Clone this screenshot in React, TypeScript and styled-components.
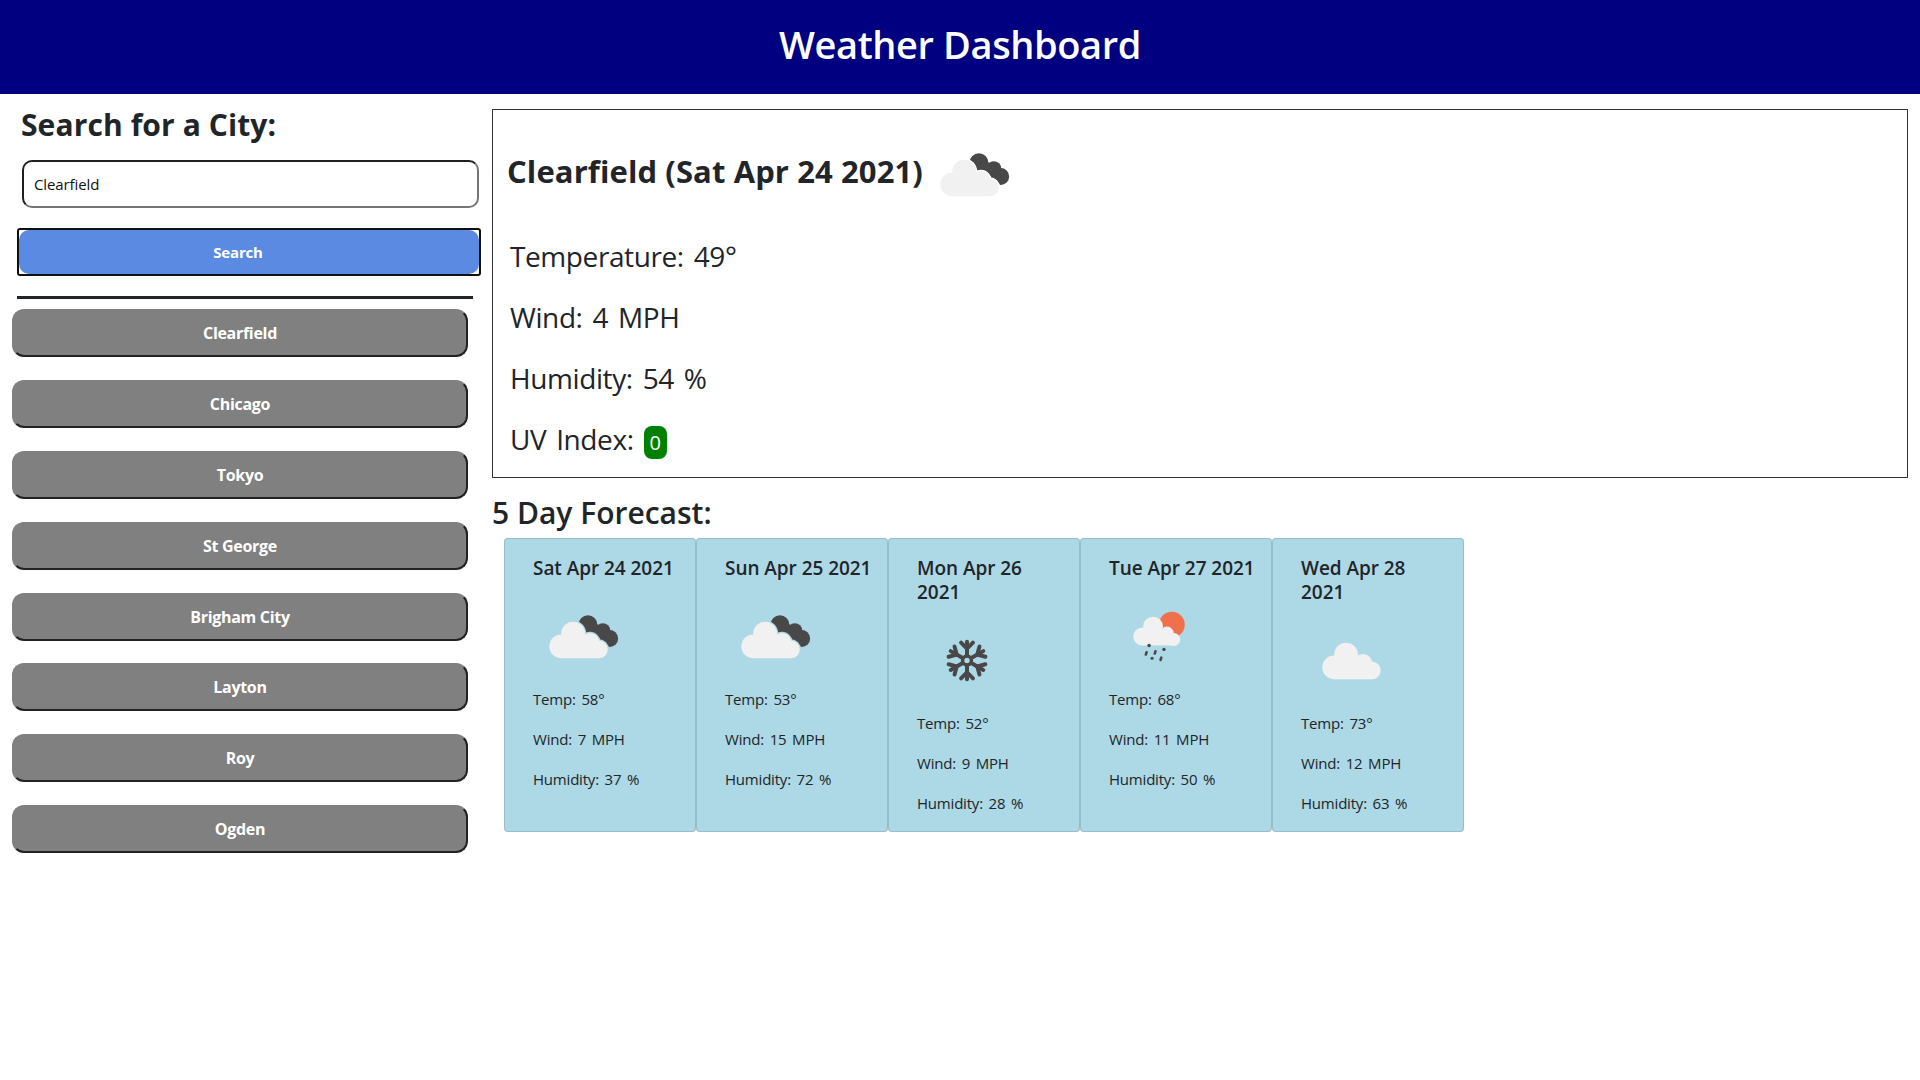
import React from "react";
import styled, { createGlobalStyle } from "styled-components";

const GlobalStyle = createGlobalStyle`
  body {
    margin: 0;
    background: #fff;
    color: #212529;
    font-family: "Open Sans", "Noto Sans", sans-serif;
    font-size: 16px;
  }
  * {
    box-sizing: border-box;
  }
`;

type IconKind = "broken" | "scattered" | "snow" | "rain";

const cities = ["Clearfield", "Chicago", "Tokyo", "St George", "Brigham City", "Layton", "Roy", "Ogden"];

const forecast: { date: string; icon: IconKind; temp: number; wind: number; humidity: number }[] = [
  { date: "Sat Apr 24 2021", icon: "broken", temp: 58, wind: 7, humidity: 37 },
  { date: "Sun Apr 25 2021", icon: "broken", temp: 53, wind: 15, humidity: 72 },
  { date: "Mon Apr 26 2021", icon: "snow", temp: 52, wind: 9, humidity: 28 },
  { date: "Tue Apr 27 2021", icon: "rain", temp: 68, wind: 11, humidity: 50 },
  { date: "Wed Apr 28 2021", icon: "scattered", temp: 73, wind: 12, humidity: 63 },
];

// light cloud, drawn at the spot it has in the 04d icon
const CloudShape = ({ fill, stroke }: { fill: string; stroke?: string }) => (
  <g fill={fill} stroke={stroke} strokeWidth={stroke ? 2.5 : 0}>
    <circle cx="28" cy="59" r="12" />
    <circle cx="40" cy="46" r="12" />
    <circle cx="57" cy="55" r="9.5" />
    <circle cx="66" cy="62" r="9" />
    <rect x="28" y="52" width="38" height="19" />
  </g>
);

const WeatherIcon = ({ kind }: { kind: IconKind }) => {
  const maskId = React.useId();

  if (kind === "snow") {
    return (
      <IconSvg viewBox="0 0 100 100">
        <g stroke="#484848" strokeWidth="4" strokeLinecap="round" fill="none">
          {[0, 60, 120, 180, 240, 300].map((angle) => (
            <g key={angle} transform={`rotate(${angle} 50 49)`}>
              <path d="M50 44V30" />
              <path d="M50 37l-6-6M50 37l6-6" />
            </g>
          ))}
          <circle cx="50" cy="49" r="4.5" strokeWidth="3.5" />
        </g>
      </IconSvg>
    );
  }

  if (kind === "rain") {
    return (
      <IconSvg viewBox="0 0 100 100">
        <circle cx="63" cy="37" r="13" fill="#f0704c" />
        <g fill="#f1f1f1">
          <circle cx="33" cy="49" r="9" />
          <circle cx="44" cy="39" r="10" />
          <circle cx="58" cy="46" r="7" />
          <circle cx="65" cy="52" r="6.5" />
          <rect x="33" y="46" width="32" height="12" />
        </g>
        <g fill="#484848">
          <circle cx="40" cy="58" r="1.8" />
          <rect x="35.8" y="63.5" width="2.6" height="5" rx="1.2" transform="rotate(18 37 66)" />
          <rect x="44.8" y="62.5" width="2.6" height="5" rx="1.2" transform="rotate(18 46 65)" />
          <circle cx="55" cy="62" r="1.7" />
          <circle cx="43" cy="71" r="1.6" />
          <rect x="50.8" y="69" width="2.6" height="5" rx="1.2" transform="rotate(18 52 71)" />
        </g>
      </IconSvg>
    );
  }

  if (kind === "scattered") {
    return (
      <IconSvg viewBox="0 0 100 100">
        <g transform="translate(5 -3)">
          <CloudShape fill="#f1f1f1" />
        </g>
      </IconSvg>
    );
  }

  return (
    <IconSvg viewBox="0 0 100 100">
      <mask id={maskId}>
        <rect width="100" height="100" fill="#fff" />
        <CloudShape fill="#000" stroke="#000" />
      </mask>
      <g fill="#484848" mask={`url(#${maskId})`}>
        <circle cx="55" cy="37" r="9.5" />
        <circle cx="70" cy="43" r="7.5" />
        <circle cx="77" cy="51" r="8.5" />
        <path d="M47 40L58 34L72 40L80 57L55 60Z" />
      </g>
      <CloudShape fill="#f1f1f1" />
    </IconSvg>
  );
};

export default function App() {
  return (
    <>
      <GlobalStyle />
      <Header>
        <HeaderTitle>Weather Dashboard</HeaderTitle>
      </Header>
      <Layout>
        <Sidebar>
          <SearchHeading>Search for a City:</SearchHeading>
          <SearchInput defaultValue="Clearfield" />
          <FocusRing>
            <SearchButton>Search</SearchButton>
          </FocusRing>
          <Divider />
          <CityList>
            {cities.map((city) => (
              <CityButton key={city}>{city}</CityButton>
            ))}
          </CityList>
        </Sidebar>
        <Content>
          <CurrentBox>
            <CurrentTitleRow>
              <CurrentTitle>Clearfield (Sat Apr 24 2021)</CurrentTitle>
              <WeatherIcon kind="broken" />
            </CurrentTitleRow>
            <CurrentStat>Temperature: 49°</CurrentStat>
            <CurrentStat>Wind: 4 MPH</CurrentStat>
            <CurrentStat>Humidity: 54 %</CurrentStat>
            <CurrentStat>
              UV Index: <UvBadge>0</UvBadge>
            </CurrentStat>
          </CurrentBox>
          <ForecastHeading>5 Day Forecast:</ForecastHeading>
          <ForecastRow>
            {forecast.map((day) => (
              <ForecastCard key={day.date}>
                <CardTitle>{day.date}</CardTitle>
                <WeatherIcon kind={day.icon} />
                <CardStat>Temp: {day.temp}°</CardStat>
                <CardStat>Wind: {day.wind} MPH</CardStat>
                <CardStat>Humidity: {day.humidity} %</CardStat>
              </ForecastCard>
            ))}
          </ForecastRow>
        </Content>
      </Layout>
    </>
  );
}

const Header = styled.header`
  height: 94px;
  padding-bottom: 6px;
  background: #000080;
  display: flex;
  align-items: center;
  justify-content: center;
`;

const HeaderTitle = styled.h1`
  margin: 0;
  color: #fff;
  font-size: 38px;
  font-weight: 600;
  line-height: 48px;
  letter-spacing: -0.4px;
`;

const Layout = styled.main`
  display: grid;
  grid-template-columns: 480px 1fr;
`;

const Sidebar = styled.aside`
  display: flex;
  flex-direction: column;
  align-items: flex-start;
  padding-top: 12px;
`;

const SearchHeading = styled.h2`
  margin: 0 0 16px 21px;
  font-size: 30px;
  font-weight: 700;
  line-height: 38px;
  letter-spacing: 0.1px;
`;

const SearchInput = styled.input`
  width: 457px;
  height: 48px;
  margin: 0 0 20px 22px;
  padding: 0 10px;
  border-width: 2px;
  border-style: solid;
  border-color: #1f1f1f #767676 #767676 #1f1f1f;
  border-radius: 10px;
  color: #111;
  font-family: inherit;
  font-size: 15px;
  letter-spacing: -0.1px;
  outline: none;
`;

const FocusRing = styled.div`
  width: 464px;
  height: 48px;
  margin: 0 0 20px 17px;
  border: 2px solid #101010;
  border-radius: 3px;
`;

const SearchButton = styled.button`
  display: block;
  width: 100%;
  height: 100%;
  padding: 0 22px 0 0;
  border: none;
  border-radius: 10px;
  background: #5a8ae2;
  color: #fff;
  font-family: inherit;
  font-size: 15px;
  font-weight: 700;
  letter-spacing: -0.2px;
`;

const Divider = styled.hr`
  width: 456px;
  height: 3px;
  margin: 0 0 10px 17px;
  border: none;
  background: #212529;
`;

const CityList = styled.div`
  display: flex;
  flex-direction: column;
  gap: 22.9px;
  margin-left: 12px;
`;

const CityButton = styled.button`
  width: 456px;
  height: 48px;
  border-width: 2px;
  border-style: solid;
  border-color: #808080 #222 #222 #808080;
  border-radius: 12px;
  background: #808080;
  color: #fff;
  font-family: inherit;
  font-size: 16px;
  font-weight: 700;
  letter-spacing: -0.3px;
`;

const Content = styled.section`
  padding: 15px 12px 0;
`;

const CurrentBox = styled.div`
  height: 369px;
  padding: 16px 14px 0 17px;
  border: 1px solid #333;
`;

const CurrentTitleRow = styled.div`
  display: flex;
  align-items: flex-start;
  height: 108px;
`;

const CurrentTitle = styled.h2`
  margin: 26px 1px 0 -3px;
  font-size: 31px;
  font-weight: 700;
  line-height: 38px;
  letter-spacing: 0.1px;
`;

const CurrentStat = styled.p`
  margin: 0 0 16px 0;
  font-size: 28px;
  line-height: 45px;
  letter-spacing: -0.4px;
  word-spacing: 3px;
`;

const UvBadge = styled.span`
  display: inline-block;
  width: 23px;
  height: 33px;
  border-radius: 8px;
  background: #008000;
  color: #fff;
  font-size: 20px;
  line-height: 33px;
  text-align: center;
  vertical-align: 0;
`;

const ForecastHeading = styled.h3`
  margin: 16px 0 6px;
  font-size: 30px;
  font-weight: 600;
  line-height: 38px;
  letter-spacing: 0;
`;

const ForecastRow = styled.div`
  display: flex;
  margin-left: 12px;
`;

const ForecastCard = styled.article`
  width: 192px;
  height: 294px;
  padding: 17px 14px 0 28px;
  border: 1px solid rgba(0, 0, 0, 0.125);
  border-radius: 4px;
  background: #add8e6;
`;

const CardTitle = styled.h5`
  margin: 0 0 8px;
  font-size: 19px;
  font-weight: 600;
  line-height: 24px;
  letter-spacing: -0.05px;
`;

const IconSvg = styled.svg`
  display: block;
  width: 100px;
  height: 99px;
  flex-shrink: 0;
`;

const CardStat = styled.p`
  margin: 0 0 16px;
  font-size: 15px;
  line-height: 24px;
  letter-spacing: -0.2px;
  word-spacing: 2px;
`;
